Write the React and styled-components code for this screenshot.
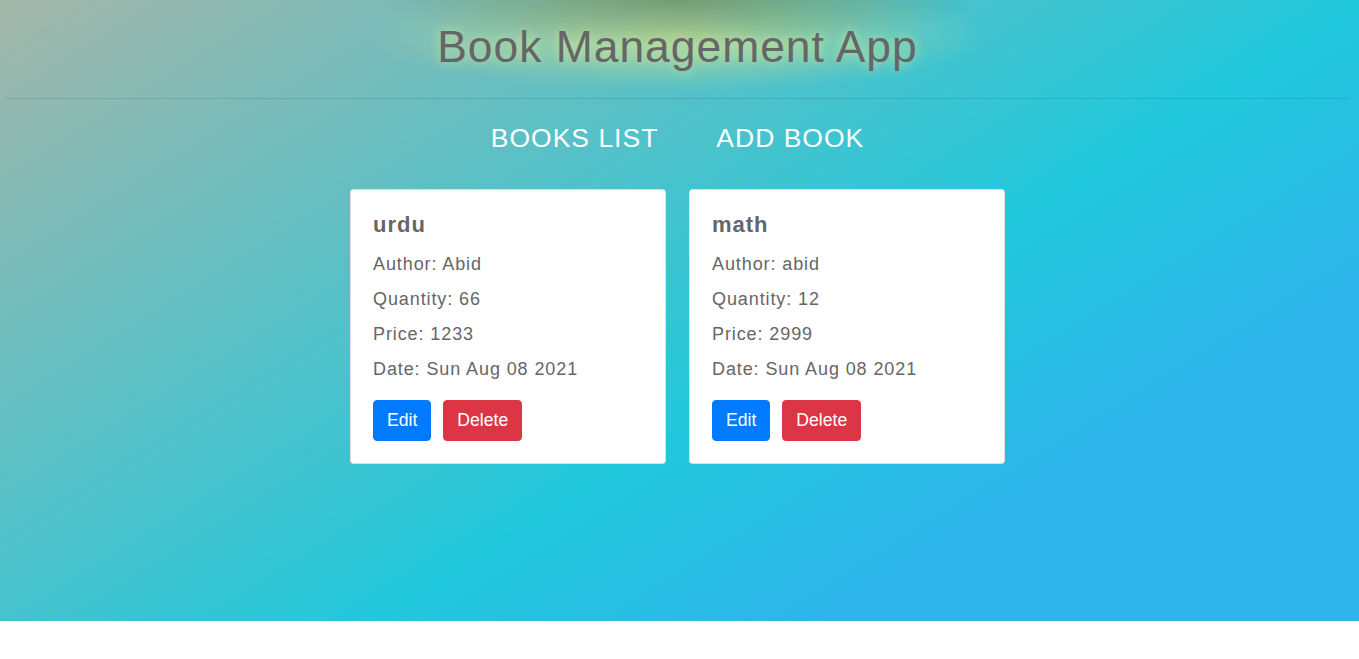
import React from "react";
import styled, { createGlobalStyle } from "styled-components";

const GlobalStyle = createGlobalStyle`
  html, body {
    margin: 0;
    padding: 0;
    background: #ffffff;
  }
  body {
    font-family: "Liberation Sans", Arial, sans-serif;
  }
  * { box-sizing: border-box; }
`;

const Page = styled.div`
  height: 621px;
  padding: 0 10px 0 6px;
  background: linear-gradient(148deg, #a4b6a9 0%, #21c8dc 58%, #2db5ea 77%, #2db5ea 100%);
  letter-spacing: 1px;
  overflow: hidden;
`;

const Header = styled.header`
  padding: 21px 0 25.5px;
  background:
    radial-gradient(ellipse 300px 46px at 50% 0px, rgba(105, 120, 65, 0.55), rgba(105, 120, 65, 0)),
    radial-gradient(ellipse 310px 58px at 50% 34px, rgba(205, 222, 140, 0.7), rgba(205, 222, 140, 0));
`;

const Title = styled.h1`
  margin: 0;
  text-align: center;
  font-weight: 400;
  font-size: 44.4px;
  line-height: 51.5px;
  color: #666666;
  text-shadow: 0 0 12px rgba(255, 255, 150, 0.55);
`;

const Rule = styled.hr`
  margin: 0;
  border: 0;
  border-top: 1px solid rgba(0, 0, 0, 0.1);
  height: 0;
`;

const Nav = styled.nav`
  display: flex;
  justify-content: center;
  gap: 58px;
  margin-top: 24px;
`;

const NavLink = styled.a`
  color: #ffffff;
  font-size: 26.5px;
  line-height: 30.5px;
  text-transform: uppercase;
  text-decoration: none;
  cursor: pointer;
`;

const CardList = styled.div`
  display: flex;
  justify-content: center;
  gap: 23px;
  margin-top: 35px;
`;

const Card = styled.div`
  width: 316px;
  background: #ffffff;
  border: 1px solid rgba(0, 0, 0, 0.125);
  border-radius: 4px;
  padding: 22px;
  color: #666666;
`;

const CardTitle = styled.h3`
  margin: 0 0 13px;
  font-size: 22px;
  line-height: 26px;
  font-weight: 700;
`;

const Field = styled.p`
  margin: 0 0 8px;
  font-size: 18px;
  line-height: 27px;
  letter-spacing: 0.9px;
`;

const Actions = styled.div`
  display: flex;
  gap: 12px;
  margin-top: 17px;
`;

const Button = styled.button`
  font-family: "Liberation Sans", Arial, sans-serif;
  font-size: 17.6px;
  line-height: 27px;
  padding: 6px 13px;
  border: 1px solid ${(p) => p.$color};
  background: ${(p) => p.$color};
  color: #ffffff;
  border-radius: 4px;
  cursor: pointer;
`;

const books = [
  { name: "urdu", author: "Abid", quantity: 66, price: 1233, date: "Sun Aug 08 2021" },
  { name: "math", author: "abid", quantity: 12, price: 2999, date: "Sun Aug 08 2021" },
];

export default function App() {
  return (
    <>
      <GlobalStyle />
      <Page>
        <Header>
          <Title>Book Management App</Title>
        </Header>
        <Rule />
        <Nav>
          <NavLink>Books List</NavLink>
          <NavLink>Add Book</NavLink>
        </Nav>
        <CardList>
          {books.map((b) => (
            <Card key={b.name}>
              <CardTitle>{b.name}</CardTitle>
              <Field>Author: {b.author}</Field>
              <Field>Quantity: {b.quantity}</Field>
              <Field>Price: {b.price}</Field>
              <Field>Date: {b.date}</Field>
              <Actions>
                <Button $color="#007bff">Edit</Button>
                <Button $color="#dc3545">Delete</Button>
              </Actions>
            </Card>
          ))}
        </CardList>
      </Page>
    </>
  );
}
